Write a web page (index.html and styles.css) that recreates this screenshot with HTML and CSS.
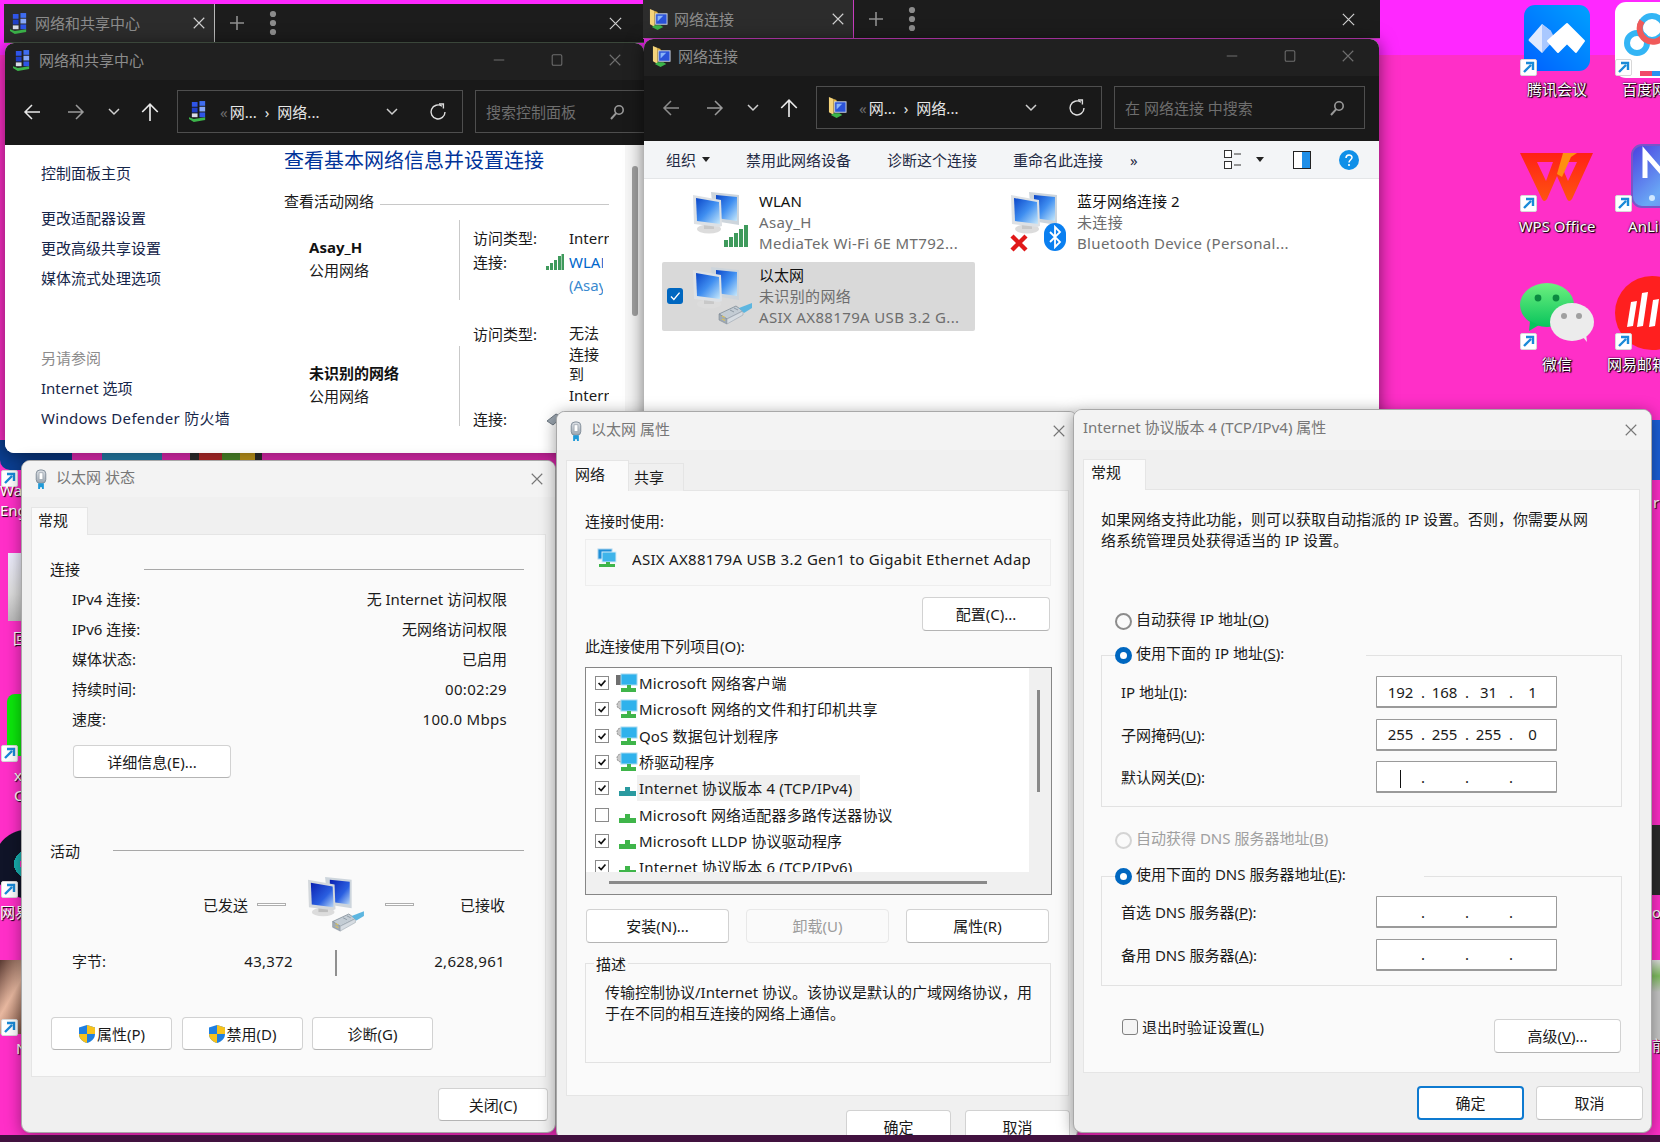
FILE: index.html
```html
<!DOCTYPE html>
<html lang="zh-CN">
<head>
<meta charset="utf-8">
<title>网络连接</title>
<link rel="stylesheet" href="styles.css">
</head>
<body>
<svg class="sprite" aria-hidden="true">
  <defs>
    <linearGradient id="gScreen" x1="0" y1="0" x2="1" y2="1"><stop offset="0" stop-color="#0b46c8"/><stop offset=".5" stop-color="#3f8ef0"/><stop offset="1" stop-color="#c6e8fb"/></linearGradient>
    <linearGradient id="gScreenDark" x1="0" y1="0" x2="1" y2="1"><stop offset="0" stop-color="#0a1fb0"/><stop offset=".6" stop-color="#2a5fe0"/><stop offset="1" stop-color="#b8d8f8"/></linearGradient>
    <linearGradient id="gMeet" x1="0" y1="1" x2="1" y2="0"><stop offset="0" stop-color="#0060ff"/><stop offset="1" stop-color="#00a2ff"/></linearGradient>
    <linearGradient id="gAn" x1="0" y1="0" x2="1" y2="1"><stop offset="0" stop-color="#4a3fe0"/><stop offset=".6" stop-color="#6aa8f5"/><stop offset="1" stop-color="#7a6ff0"/></linearGradient>
    <linearGradient id="gChat" x1="0" y1="0" x2="0" y2="1"><stop offset="0" stop-color="#6ef07f"/><stop offset="1" stop-color="#08c45c"/></linearGradient>
    <linearGradient id="gWps" x1="0" y1="0" x2="0" y2="1"><stop offset="0" stop-color="#ff2016"/><stop offset="1" stop-color="#ff5510"/></linearGradient>
    <linearGradient id="gPlug" x1="0" y1="0" x2="0" y2="1"><stop offset="0" stop-color="#dfe3e8"/><stop offset="1" stop-color="#9aa4ae"/></linearGradient>

    <symbol id="i-close" viewBox="0 0 16 16"><path d="M2 2l12 12M14 2L2 14" fill="none" stroke="currentColor" stroke-width="1.3"/></symbol>
    <symbol id="i-min" viewBox="0 0 16 16"><path d="M2 8h12" fill="none" stroke="currentColor" stroke-width="1.2"/></symbol>
    <symbol id="i-max" viewBox="0 0 16 16"><rect x="2.5" y="2" width="11" height="12" rx="1.5" fill="none" stroke="currentColor" stroke-width="1.2"/></symbol>
    <symbol id="i-plus" viewBox="0 0 16 16"><path d="M8 1v14M1 8h14" fill="none" stroke="currentColor" stroke-width="1.6"/></symbol>
    <symbol id="i-dots" viewBox="0 0 8 26"><circle cx="4" cy="4" r="3.1" fill="currentColor"/><circle cx="4" cy="13" r="3.1" fill="currentColor"/><circle cx="4" cy="22" r="3.1" fill="currentColor"/></symbol>
    <symbol id="i-back" viewBox="0 0 18 18"><path d="M17 9H2M9 2L2 9l7 7" fill="none" stroke="currentColor" stroke-width="1.5"/></symbol>
    <symbol id="i-fwd" viewBox="0 0 18 18"><path d="M1 9h15M9 2l7 7-7 7" fill="none" stroke="currentColor" stroke-width="1.5"/></symbol>
    <symbol id="i-up" viewBox="0 0 18 18"><path d="M9 17V2M2 9l7-7 7 7" fill="none" stroke="currentColor" stroke-width="1.5"/></symbol>
    <symbol id="i-chev" viewBox="0 0 14 10"><path d="M2 2l5 5 5-5" fill="none" stroke="currentColor" stroke-width="1.5"/></symbol>
    <symbol id="i-refresh" viewBox="0 0 18 18"><path d="M13 3.2A7 7 0 1 0 16 9" fill="none" stroke="currentColor" stroke-width="1.4"/><path d="M10 1h4.4v4.4" fill="none" stroke="currentColor" stroke-width="1.4"/></symbol>
    <symbol id="i-search" viewBox="0 0 16 16"><circle cx="10" cy="6" r="4.2" fill="none" stroke="currentColor" stroke-width="1.6"/><path d="M7 9.4L2 15" fill="none" stroke="currentColor" stroke-width="2"/></symbol>

    <symbol id="i-cpl" viewBox="0 0 20 22"><path d="M0 19l5 3 12-2v-3l-12 2-5-2z" fill="#3cb54a"/><rect x="3" y="1" width="6" height="5" fill="#2f55e8"/><rect x="11" y="0" width="6" height="5" fill="#3f6df0"/><rect x="3" y="7" width="6" height="5" fill="#1f3fc8"/><rect x="11" y="6" width="6" height="5" fill="#88a8f8"/><rect x="3" y="13" width="6" height="4" fill="#d8dce8"/><rect x="11" y="12" width="6" height="5" fill="#2f55e8"/></symbol>
    <symbol id="i-netfolder" viewBox="0 0 20 22"><path d="M1 0l5 2v17l-5-3z" fill="#f4d37a"/><path d="M6 2l3 1v3H6z" fill="#e8b63c"/><rect x="7" y="5" width="12" height="11" fill="#2a52d8" stroke="#cfd6e0"/><path d="M9 7h6l-6 6z" fill="#8ab4f8"/><path d="M3 19l6 3 6-3-3-2H6z" fill="#3cb54a"/></symbol>

    <symbol id="i-pc" viewBox="0 0 60 58">
      <path d="M19 0l28 3v30l-25-4z" fill="#cdd5dc"/><path d="M24 3l21 2v24l-21-3z" fill="url(#gScreen)"/>
      <ellipse cx="17" cy="37" rx="12" ry="4.500" fill="#dcdcdc"/><rect x="12" y="32" width="10" height="5" fill="#c8c8c8"/>
      <path d="M1 3l28 5 1 26-3 1-25-3z" fill="#dde1e5"/><path d="M4 6l23 4 1 22-23-3z" fill="url(#gScreen)"/>
    </symbol>
    <symbol id="i-pc-d" viewBox="0 0 60 58">
      <path d="M19 0l28 3v30l-25-4z" fill="#cdd5dc"/><path d="M24 3l21 2v24l-21-3z" fill="url(#gScreenDark)"/>
      <ellipse cx="17" cy="37" rx="12" ry="4.500" fill="#dcdcdc"/><rect x="12" y="32" width="10" height="5" fill="#bdbdbd"/>
      <path d="M1 3l28 5 1 26-3 1-25-3z" fill="#d4d8dc"/><path d="M4 6l23 4 1 22-23-3z" fill="url(#gScreenDark)"/>
    </symbol>
    <symbol id="i-wifi" viewBox="0 0 60 58"><g fill="#3f9a5c"><rect x="32" y="48" width="4" height="7"/><rect x="37" y="45" width="4" height="10"/><rect x="42" y="41" width="4" height="14"/><rect x="47" y="37" width="4" height="18"/><rect x="52" y="33" width="4" height="22"/></g></symbol>
    <symbol id="i-eth" viewBox="0 0 60 58"><path d="M27 47l17-8 7 5-16 8z" fill="#c3ccd4" stroke="#7f8b95" stroke-width=".8"/><path d="M27 47v6l8 4v-5z" fill="#a0abb5" stroke="#7f8b95" stroke-width=".6"/><path d="M35 52v5l16-9v-4z" fill="#d6dce2" stroke="#9aa4ae" stroke-width=".6"/><path d="M30 49l3 1.500M30 52l3 1.500" stroke="#d8c060" stroke-width="1.200"/><path d="M38 43l4 2M42 41l4 2" stroke="#8e9aa5" stroke-width="1"/><path d="M47 41l13-5v5l-8 5z" fill="#5db6e0"/></symbol>
    <symbol id="i-bt" viewBox="0 0 22 28"><rect width="22" height="28" rx="11" fill="#0a7ff0"/><path d="M6 9l10 10-5 5V4l5 5L6 19" fill="none" stroke="#fff" stroke-width="1.8"/></symbol>
    <symbol id="i-redx" viewBox="0 0 18 18"><path d="M2 2l14 14M16 2L2 16" stroke="#e01818" stroke-width="4.4" fill="none"/></symbol>
    <symbol id="i-plug" viewBox="0 0 14 22"><rect x="2" y="1" width="10" height="14" rx="4" fill="url(#gPlug)" stroke="#7e8a96"/><rect x="5" y="4" width="4" height="7" fill="#fff" stroke="#8a949e" stroke-width=".6"/><path d="M4 15h6v6H8v-2H6v2H4z" fill="#1f9ad8"/></symbol>
    <symbol id="i-shield" viewBox="0 0 18 20"><path d="M9 1l8 2.500V10c0 4.600-3.600 7.800-8 9-4.400-1.200-8-4.400-8-9V3.500z" fill="#1f7fe0"/><path d="M9 1l8 2.500V10H9zM9 10v9c-4.400-1.200-8-4.400-8-9z" fill="#f7c21c"/></symbol>
    <symbol id="i-nicsm" viewBox="0 0 22 20"><rect x="2" y="1" width="14" height="10" fill="#1f8fd8" stroke="#a9d4ee"/><rect x="6" y="4" width="14" height="10" fill="#3fb4ea" stroke="#d4ecf9"/><path d="M10 14h4v2h5v3H3v-3h7z" fill="#3fb54a"/></symbol>
    <symbol id="i-client" viewBox="0 0 22 20"><rect x="0" y="2" width="6" height="10" fill="#6f6f6f"/><rect x="5" y="1" width="16" height="11" fill="#2fb2ec" stroke="#a4d8ef"/><path d="M11 12h4v3h5v4H5v-4h6z" fill="#3fb54a"/></symbol>
    <symbol id="i-svc" viewBox="0 0 22 20"><circle cx="5" cy="6" r="4" fill="#c8c8c8" stroke="#8c8c8c" stroke-dasharray="2 1"/><rect x="5" y="1" width="16" height="11" fill="#2fb2ec" stroke="#a4d8ef"/><path d="M11 12h4v3h5v4H5v-4h6z" fill="#3fb54a"/></symbol>
    <symbol id="i-proto" viewBox="0 0 22 20"><path d="M9 9h5v4h6v5H3v-5h6z" fill="#3fb54a"/></symbol>
    <symbol id="i-proto-t" viewBox="0 0 22 20"><path d="M9 9h5v4h6v5H3v-5h6z" fill="#2a9aa0"/></symbol>
    <symbol id="i-shortcut" viewBox="0 0 17 17"><rect x=".5" y=".5" width="16" height="16" rx="1.500" fill="#fff" stroke="#d8d8d8"/><path d="M4 13l7-7M6 4h7v7" fill="none" stroke="#1a8ad8" stroke-width="2.400"/></symbol>
    <symbol id="i-wifi-s" viewBox="0 0 18 18"><g fill="#3f9a5c"><rect x="0" y="13" width="3" height="4"/><rect x="4" y="10" width="3" height="7"/><rect x="8" y="7" width="3" height="10"/><rect x="12" y="3" width="3" height="14"/><rect x="15.500" y="1" width="2.500" height="16"/></g></symbol>
    <symbol id="i-eth-s" viewBox="0 0 18 18"><path d="M1 11l9-7 6 3-9 8z" fill="#9aa4ae" stroke="#6e7882"/><path d="M12 4l5-3v4z" fill="#b8c8d4"/></symbol>
    <symbol id="i-views" viewBox="0 0 18 22"><rect x=".5" y="1.500" width="7" height="7" fill="#fff" stroke="#333"/><rect x=".5" y="12.500" width="7" height="7" fill="#fff" stroke="#333"/><path d="M10 5h7M10 16h7" stroke="#333"/></symbol>
    <symbol id="i-pane" viewBox="0 0 18 18"><rect x=".5" y=".5" width="17" height="17" fill="#fff" stroke="#222"/><rect x="9" y="1" width="8" height="16" fill="#1f8fe8"/></symbol>
    <symbol id="i-help" viewBox="0 0 20 20"><circle cx="10" cy="10" r="10" fill="#0f8fe8"/><path d="M7 8c0-4 6-4 6-.5 0 2-3 2.500-3 5" fill="none" stroke="#fff" stroke-width="1.500"/><circle cx="10" cy="15" r="1.100" fill="#fff"/></symbol>
    <symbol id="i-caret" viewBox="0 0 8 5"><path d="M0 0h8L4 5z" fill="#222"/></symbol>
    <symbol id="i-checkb" viewBox="0 0 14 14"><path d="M3 7l3 3 5-6" fill="none" stroke="#111" stroke-width="2"/></symbol>
  </defs>
</svg>

<main class="desktop">
  <!-- desktop icons -->
  <div class="dicon d-c1r1"><div class="dicon-art"><svg class="art" viewBox="0 0 74 74"><rect x="4" y="3" width="66" height="66" rx="11" fill="url(#gMeet)"/><path d="M22 22L9 37q-1 1 0 2l13 12 9-11-5-6 5-5z" fill="#dfe9ff"/><path d="M22 22l9 7 4 8-13 14z" fill="#a9c8ff"/><path d="M47 22l17 17-8 11-9-9-9 9-10-11z" fill="#fff" stroke="#fff" stroke-width="2" stroke-linejoin="round"/></svg><svg class="sc"><use href="#i-shortcut"/></svg></div><span class="dlabel">腾讯会议</span></div>
  <div class="dicon d-c2r1"><div class="dicon-art"><svg class="art" viewBox="0 0 74 74"><rect x="0" y="0" width="90" height="76" rx="11" fill="#fff"/><circle cx="22" cy="41" r="10" fill="none" stroke="#33b5f5" stroke-width="6"/><circle cx="37" cy="26" r="12" fill="none" stroke="#33b5f5" stroke-width="6"/><path d="M27 19a13 13 0 0 0 22 15" fill="none" stroke="#f05a5a" stroke-width="6"/><rect x="25" y="69" width="12" height="5" fill="#f04a6a"/><rect x="37" y="69" width="37" height="5" fill="#2a90f0"/></svg><svg class="sc"><use href="#i-shortcut"/></svg></div><span class="dlabel">百度网盘</span></div>
  <div class="dicon d-c1r2"><div class="dicon-art"><svg class="art" viewBox="0 0 74 74"><path fill-rule="evenodd" d="M0 15h73L52 61q-3 4-5 0L37 38 27 61q-3 4-5 0zM17 24l9 19 7-19zM44 24l-2 5 6 14 9-19z" fill="url(#gWps)"/><path d="M43 15h14l-6 4-9 20-5-3z" fill="#ff9010"/></svg><svg class="sc"><use href="#i-shortcut"/></svg></div><span class="dlabel">WPS Office</span></div>
  <div class="dicon d-c2r2"><div class="dicon-art"><svg class="art" viewBox="0 0 74 74"><rect x="17" y="7" width="62" height="62" rx="10" fill="url(#gAn)" stroke="#7a55c8" stroke-width="2"/><path d="M30 40V15l26 30" fill="none" stroke="#fff" stroke-width="5"/><circle cx="37" cy="60" r="3" fill="#cfe8ff"/></svg><svg class="sc"><use href="#i-shortcut"/></svg></div><span class="dlabel">AnLink</span></div>
  <div class="dicon d-c1r3"><div class="dicon-art"><svg class="art" viewBox="0 0 74 74"><ellipse cx="27" cy="29" rx="27" ry="22" fill="url(#gChat)"/><path d="M10 45l-1 10 10-6z" fill="#08c45c"/><circle cx="18" cy="22" r="3.400" fill="#0a8a40"/><circle cx="36" cy="22" r="3.400" fill="#0a8a40"/><ellipse cx="52" cy="46" rx="22" ry="19" fill="#ececec"/><path d="M62 60l5 6-1-9z" fill="#ececec"/><circle cx="44" cy="40" r="3" fill="#a0a0a0"/><circle cx="59" cy="40" r="3" fill="#a0a0a0"/></svg><svg class="sc"><use href="#i-shortcut"/></svg></div><span class="dlabel">微信</span></div>
  <div class="dicon d-c2r3"><div class="dicon-art"><svg class="art" viewBox="0 0 74 74"><circle cx="37" cy="37" r="37" fill="#ff1f1f"/><g fill="#fff"><path d="M16 26l6-1-4 25-6 1z"/><path d="M27 17l6-1-5 34-6 1z"/><path d="M38 24l6-1-4 27-6 1z"/><path d="M49 15l7-1-4 42-7 1z"/></g></svg><svg class="sc"><use href="#i-shortcut"/></svg></div><span class="dlabel">网易邮箱大师</span></div>

  <!-- icons half hidden at the screen edges -->
  <div class="sliver sl-a"></div><div class="sliver sl-b"></div><div class="sliver sl-c"></div>
  <div class="sliver sl-bin"></div><div class="sliver sl-green"></div><div class="sliver sl-ring"></div><div class="sliver sl-anime"></div>
  <div class="sliver sl-r1"></div><div class="sliver sl-r2"></div><div class="sliver sl-r3"></div>
  <svg class="edge-sc es1"><use href="#i-shortcut"/></svg>
  <svg class="edge-sc es2"><use href="#i-shortcut"/></svg>
  <svg class="edge-sc es3"><use href="#i-shortcut"/></svg>
  <svg class="edge-sc es4"><use href="#i-shortcut"/></svg>
  <span class="edge-t et1">Wa<br>Eng</span>
  <span class="edge-t et2">回</span>
  <span class="edge-t et3">x<br>C</span>
  <span class="edge-t et4">网易</span>
  <span class="edge-t et5">N</span>
  <span class="edge-t et6">r</span>
  <span class="edge-t et7">oc</span>
  <span class="edge-t et8">前</span>

  <!-- window A: tabs -->
  <div class="tabstrip tabs-a">
    <div class="tab"><svg class="ic19"><use href="#i-cpl"/></svg><span class="tab-name">网络和共享中心</span><svg class="tab-x"><use href="#i-close"/></svg></div>
    <svg class="strip-plus"><use href="#i-plus"/></svg>
    <svg class="strip-dots"><use href="#i-dots"/></svg>
    <svg class="strip-x"><use href="#i-close"/></svg>
  </div>

  <!-- window A -->
  <section class="win win-a">
    <header class="titlebar"><svg class="ic19"><use href="#i-cpl"/></svg><span class="win-title">网络和共享中心</span>
      <div class="caption"><svg><use href="#i-min"/></svg><svg><use href="#i-max"/></svg><svg><use href="#i-close"/></svg></div>
    </header>
    <div class="toolbar">
      <svg class="nav nav-on"><use href="#i-back"/></svg><svg class="nav"><use href="#i-fwd"/></svg><svg class="nav-ch"><use href="#i-chev"/></svg><svg class="nav nav-on nav-up"><use href="#i-up"/></svg>
      <div class="addr"><svg class="ic19"><use href="#i-cpl"/></svg><span class="crumb-more">«</span><span>网...</span><span class="crumb-sep">›</span><span>网络...</span>
        <div class="addr-end"><svg class="addr-ch"><use href="#i-chev"/></svg><svg class="addr-re"><use href="#i-refresh"/></svg></div></div>
      <div class="search search-a"><span>搜索控制面板</span><svg class="search-ic"><use href="#i-search"/></svg></div>
    </div>
    <div class="cp-body">
      <nav class="cp-nav">
        <a>控制面板主页</a>
        <a class="cp-gap">更改适配器设置</a><a>更改高级共享设置</a><a>媒体流式处理选项</a>
        <span class="cp-see">另请参阅</span>
        <a>Internet 选项</a><a class="latin-w">Windows Defender 防火墙</a>
      </nav>
      <div class="cp-main">
        <h1 class="cp-h1">查看基本网络信息并设置连接</h1>
        <div class="cp-sec"><span>查看活动网络</span><i></i></div>
        <div class="net net-1">
          <div class="net-name"><b>Asay_H</b><span>公用网络</span></div>
          <i class="net-line"></i>
          <div class="net-info">
            <div class="nrow"><span class="nl2">访问类型:</span><span class="nv">Internet</span></div>
            <div class="nrow"><span class="nl">连接:</span><svg class="ns"><use href="#i-wifi-s"/></svg><span class="nv link">WLAN</span></div>
            <div class="nrow nrow-c"><span class="nl2"></span><span class="nv link2">(Asay_H)</span></div>
          </div>
        </div>
        <div class="net net-2">
          <div class="net-name net-name-2"><b>未识别的网络</b><span>公用网络</span></div>
          <i class="net-line net-line-2"></i>
          <div class="net-info net-info-2">
            <div class="nrow"><span class="nl2">访问类型:</span><span class="nv">无法<br>连接<br>到<br>Internet</span></div>
            <div class="nrow nrow-e"><span class="nl">连接:</span><svg class="ns"><use href="#i-eth-s"/></svg></div>
          </div>
        </div>
      </div>
      <div class="cp-scroll"><i></i></div>
    </div>
  </section>

  <!-- window B: tabs -->
  <div class="tabstrip tabs-b">
    <div class="tab"><svg class="ic19"><use href="#i-netfolder"/></svg><span class="tab-name">网络连接</span><svg class="tab-x"><use href="#i-close"/></svg></div>
    <svg class="strip-plus"><use href="#i-plus"/></svg>
    <svg class="strip-dots"><use href="#i-dots"/></svg>
    <svg class="strip-x"><use href="#i-close"/></svg>
  </div>

  <!-- window B -->
  <section class="win win-b">
    <header class="titlebar"><svg class="ic19"><use href="#i-netfolder"/></svg><span class="win-title">网络连接</span>
      <div class="caption"><svg><use href="#i-min"/></svg><svg><use href="#i-max"/></svg><svg><use href="#i-close"/></svg></div>
    </header>
    <div class="toolbar">
      <svg class="nav nav-dim"><use href="#i-back"/></svg><svg class="nav"><use href="#i-fwd"/></svg><svg class="nav-ch"><use href="#i-chev"/></svg><svg class="nav nav-on nav-up"><use href="#i-up"/></svg>
      <div class="addr"><svg class="ic19"><use href="#i-netfolder"/></svg><span class="crumb-more">«</span><span>网...</span><span class="crumb-sep">›</span><span>网络...</span>
        <div class="addr-end"><svg class="addr-ch"><use href="#i-chev"/></svg><svg class="addr-re"><use href="#i-refresh"/></svg></div></div>
      <div class="search search-b"><span>在 网络连接 中搜索</span><svg class="search-ic"><use href="#i-search"/></svg></div>
    </div>
    <div class="cmdbar">
      <span class="cmd">组织<svg class="caret"><use href="#i-caret"/></svg></span>
      <span class="cmd">禁用此网络设备</span><span class="cmd">诊断这个连接</span><span class="cmd">重命名此连接</span><span class="cmd-more">»</span>
      <div class="cmd-end"><svg class="cmd-views"><use href="#i-views"/></svg><svg class="caret caret-v"><use href="#i-caret"/></svg><svg class="cmd-pane"><use href="#i-pane"/></svg><svg class="cmd-help"><use href="#i-help"/></svg></div>
    </div>
    <div class="conns">
      <div class="conn">
        <svg class="conn-ic" viewBox="0 0 60 58"><use href="#i-pc"/><use href="#i-wifi"/></svg>
        <div class="conn-t"><strong>WLAN</strong><span>Asay_H</span><span>MediaTek Wi-Fi 6E MT792...</span></div>
      </div>
      <div class="conn">
        <svg class="conn-ic" viewBox="0 0 60 58"><use href="#i-pc"/><use href="#i-redx" x="0" y="42" width="18" height="18"/><use href="#i-bt" x="34" y="31" width="22" height="28"/></svg>
        <div class="conn-t"><strong>蓝牙网络连接 2</strong><span>未连接</span><span>Bluetooth Device (Personal...</span></div>
      </div>
      <div class="conn conn-sel">
        <span class="conn-check"><svg viewBox="0 0 14 14"><path d="M3.500 7.500l2.500 2.500 5-6" fill="none" stroke="#fff" stroke-width="1.200"/></svg></span>
        <svg class="conn-ic" viewBox="0 0 60 58"><use href="#i-pc"/><use href="#i-eth"/></svg>
        <div class="conn-t"><strong>以太网</strong><span>未识别的网络</span><span>ASIX AX88179A USB 3.2 G...</span></div>
      </div>
    </div>
  </section>

  <!-- status dialog -->
  <section class="dlg dlg-status">
    <header class="dlg-title dt-status"><svg class="plug"><use href="#i-plug"/></svg><span>以太网 状态</span><svg class="dlg-x"><use href="#i-close"/></svg></header>
    <div class="dtabs"><span class="dtab dtab-on dt-w56">常规</span></div>
    <div class="dpanel st-panel">
      <div class="st-sec st-sec-1"><span>连接</span><i></i></div>
      <div class="st-rows">
        <div class="st-row"><span>IPv4 连接:</span><span>无 Internet 访问权限</span></div>
        <div class="st-row"><span>IPv6 连接:</span><span>无网络访问权限</span></div>
        <div class="st-row"><span>媒体状态:</span><span>已启用</span></div>
        <div class="st-row"><span>持续时间:</span><span class="latin-w">00:02:29</span></div>
        <div class="st-row"><span>速度:</span><span class="latin-w">100.0 Mbps</span></div>
      </div>
      <button class="btn st-detail">详细信息(E)...</button>
      <div class="st-sec st-sec-2"><span>活动</span><i></i></div>
      <div class="st-act">
        <span class="st-lab">已发送</span><i class="st-dash"></i>
        <svg class="st-pc" viewBox="0 0 60 58"><use href="#i-pc-d"/><use href="#i-eth"/></svg>
        <i class="st-dash"></i><span class="st-lab st-lab-r">已接收</span>
      </div>
      <div class="st-bytes"><span class="st-bl">字节:</span><span class="st-n1 latin-w">43,372</span><span class="st-n2 latin-w">2,628,961</span></div>
      <div class="st-btns">
        <button class="btn st-b"><svg class="shield"><use href="#i-shield"/></svg>属性(P)</button>
        <button class="btn st-b"><svg class="shield"><use href="#i-shield"/></svg>禁用(D)</button>
        <button class="btn st-b">诊断(G)</button>
      </div>
    </div>
    <footer class="dfoot st-foot"><button class="btn st-close">关闭(C)</button></footer>
  </section>

  <!-- properties dialog -->
  <section class="dlg dlg-props">
    <header class="dlg-title dt-props"><svg class="plug"><use href="#i-plug"/></svg><span>以太网 属性</span><svg class="dlg-x"><use href="#i-close"/></svg></header>
    <div class="dtabs dtabs-p"><span class="dtab dtab-on dt-w63">网络</span><span class="dtab dtab-off">共享</span></div>
    <div class="dpanel pr-panel">
      <div class="pr-lab pr-lab-1">连接时使用:</div>
      <div class="pr-dev"><svg class="pr-dev-ic"><use href="#i-nicsm"/></svg><span class="latin-w">ASIX AX88179A USB 3.2 Gen1 to Gigabit Ethernet Adapter</span></div>
      <div class="pr-cfg"><button class="btn pr-b-cfg">配置(C)...</button></div>
      <div class="pr-lab pr-lab-2">此连接使用下列项目(O):</div>
      <div class="pr-list">
        <ul class="pr-items">
          <li><span class="cb"><svg><use href="#i-checkb"/></svg></span><svg class="li-ic"><use href="#i-client"/></svg><span class="li-t">Microsoft 网络客户端</span></li>
          <li><span class="cb"><svg><use href="#i-checkb"/></svg></span><svg class="li-ic"><use href="#i-svc"/></svg><span class="li-t">Microsoft 网络的文件和打印机共享</span></li>
          <li><span class="cb"><svg><use href="#i-checkb"/></svg></span><svg class="li-ic"><use href="#i-svc"/></svg><span class="li-t">QoS 数据包计划程序</span></li>
          <li><span class="cb"><svg><use href="#i-checkb"/></svg></span><svg class="li-ic"><use href="#i-svc"/></svg><span class="li-t">桥驱动程序</span></li>
          <li><span class="cb"><svg><use href="#i-checkb"/></svg></span><svg class="li-ic"><use href="#i-proto-t"/></svg><span class="li-t li-hl">Internet 协议版本 4 (TCP/IPv4)</span></li>
          <li><span class="cb"></span><svg class="li-ic"><use href="#i-proto"/></svg><span class="li-t">Microsoft 网络适配器多路传送器协议</span></li>
          <li><span class="cb"><svg><use href="#i-checkb"/></svg></span><svg class="li-ic"><use href="#i-proto"/></svg><span class="li-t">Microsoft LLDP 协议驱动程序</span></li>
          <li><span class="cb"><svg><use href="#i-checkb"/></svg></span><svg class="li-ic"><use href="#i-proto"/></svg><span class="li-t">Internet 协议版本 6 (TCP/IPv6)</span></li>
        </ul>
        <div class="pr-vs"><i></i></div>
        <div class="pr-hs"><i></i></div>
      </div>
      <div class="pr-btns"><button class="btn">安装(N)...</button><button class="btn btn-off">卸载(U)</button><button class="btn">属性(R)</button></div>
      <fieldset class="pr-desc"><legend>描述</legend><p>传输控制协议/Internet 协议。该协议是默认的广域网络协议，用<br>于在不同的相互连接的网络上通信。</p></fieldset>
    </div>
    <footer class="dfoot pr-foot"><button class="btn pr-ok">确定</button><button class="btn pr-ok">取消</button></footer>
  </section>

  <!-- TCP/IPv4 dialog -->
  <section class="dlg dlg-tcp">
    <header class="dlg-title dt-tcp"><span>Internet 协议版本 4 (TCP/IPv4) 属性</span><svg class="dlg-x"><use href="#i-close"/></svg></header>
    <div class="dtabs dtabs-t"><span class="dtab dtab-on dt-w63">常规</span></div>
    <div class="dpanel tc-panel">
      <p class="tc-intro">如果网络支持此功能，则可以获取自动指派的 IP 设置。否则，你需要从网<br>络系统管理员处获得适当的 IP 设置。</p>
      <div class="radio-row rr-1"><span class="radio"></span>自动获得 IP 地址(<u>O</u>)</div>
      <fieldset class="tc-group tg-ip">
        <legend class="lg-ip"><span class="radio radio-on"></span>使用下面的 IP 地址(<u>S</u>):</legend>
        <div class="f-row"><span>IP 地址(<u>I</u>):</span><div class="ipf"><span class="oct">192</span><span class="dot">.</span><span class="oct">168</span><span class="dot">.</span><span class="oct">31</span><span class="dot">.</span><span class="oct">1</span></div></div>
        <div class="f-row"><span>子网掩码(<u>U</u>):</span><div class="ipf"><span class="oct">255</span><span class="dot">.</span><span class="oct">255</span><span class="dot">.</span><span class="oct">255</span><span class="dot">.</span><span class="oct">0</span></div></div>
        <div class="f-row"><span>默认网关(<u>D</u>):</span><div class="ipf"><span class="oct"><i class="ip-caret"></i></span><span class="dot">.</span><span class="oct"></span><span class="dot">.</span><span class="oct"></span><span class="dot">.</span><span class="oct"></span></div></div>
      </fieldset>
      <div class="radio-row rr-2 rr-off"><span class="radio radio-off"></span>自动获得 DNS 服务器地址(<u>B</u>)</div>
      <fieldset class="tc-group tg-dns">
        <legend class="lg-dns"><span class="radio radio-on"></span>使用下面的 DNS 服务器地址(<u>E</u>):</legend>
        <div class="f-row"><span>首选 DNS 服务器(<u>P</u>):</span><div class="ipf"><span class="oct"></span><span class="dot">.</span><span class="oct"></span><span class="dot">.</span><span class="oct"></span><span class="dot">.</span><span class="oct"></span></div></div>
        <div class="f-row"><span>备用 DNS 服务器(<u>A</u>):</span><div class="ipf"><span class="oct"></span><span class="dot">.</span><span class="oct"></span><span class="dot">.</span><span class="oct"></span><span class="dot">.</span><span class="oct"></span></div></div>
      </fieldset>
      <div class="tc-opts"><label class="tc-check"><span class="cb2"></span>退出时验证设置(<u>L</u>)</label><button class="btn tc-adv">高级(<u>V</u>)...</button></div>
    </div>
    <footer class="dfoot tc-foot"><button class="btn tc-b tc-primary">确定</button><button class="btn tc-b">取消</button></footer>
  </section>

  <div class="taskbar"></div>
</main>
</body>
</html>
```
FILE: styles.css
```css
* { box-sizing: border-box; }
html, body { margin: 0; padding: 0; }
body { width: 1660px; height: 1142px; overflow: hidden; background: #ff2fc8; }
ul { list-style: none; margin: 0; padding: 0; }
p { margin: 0; }
i { font-style: normal; }
.sprite { position: absolute; width: 0; height: 0; overflow: hidden; }
.latin-w { letter-spacing: .3px; }

.desktop {
  position: relative; width: 1660px; height: 1142px; overflow: hidden;
  font: 15px/22px "Noto Sans", "Noto Sans CJK SC", sans-serif; color: #1a1a1a;
  background: linear-gradient(#ff28ff 0 55px, #ff2fc8 55px);
}
.taskbar { position: absolute; left: 0; right: 0; bottom: 0; height: 7px; background: #41123f; z-index: 50; }

/* desktop icons */
.dicon { position: absolute; width: 110px; display: flex; flex-direction: column; align-items: center; }
.dicon-art { position: relative; width: 74px; height: 74px; }
.art { display: block; width: 74px; height: 74px; overflow: visible; }
.sc { position: absolute; left: 0; top: 57px; width: 17px; height: 17px; }
.dlabel { margin-top: 4px; white-space: nowrap; color: #fff; font-size: 15px; line-height: 20px; text-shadow: 1px 1px 1px #000, 0 0 2px #203, 1px 0 1px #203; }
.d-c1r1 { left: 1502px; top: 2px; }
.d-c2r1 { left: 1597px; top: 2px; }
.d-c1r1 .dlabel, .d-c2r1 .dlabel { margin-top: 3px; }
.d-c1r2 { left: 1502px; top: 138px; }
.d-c2r2 { left: 1597px; top: 138px; }
.d-c1r3 { left: 1502px; top: 276px; }
.d-c2r3 { left: 1597px; top: 276px; }

.sliver { position: absolute; }
.sl-a { left: 0; top: 440px; width: 72px; height: 30px; background: #0b3f92; border-radius: 0 0 10px 10px; }
.sl-b { left: 102px; top: 450px; width: 60px; height: 10px; background: #2a8fc0; }
.sl-c { left: 190px; top: 450px; width: 72px; height: 10px; background: linear-gradient(90deg, #333 0 12%, #d03030 12% 45%, #5aa030 45% 70%, #e0b020 70% 90%, #333 90%); }
.sl-bin { left: 8px; top: 553px; width: 14px; height: 68px; background: linear-gradient(#eef 0, #ddd 60%, #bbb); }
.sl-green { left: 7px; top: 694px; width: 15px; height: 62px; background: #0ce80c; border-radius: 8px 0 0 8px; }
.sl-ring { left: 0; top: 828px; width: 22px; height: 70px; background: radial-gradient(circle at 28px 36px, #ff2fc8 0 8px, #18b0b0 8px 14px, #101428 14px 34px, transparent 35px); }
.sl-anime { left: 0; top: 960px; width: 22px; height: 74px; background: linear-gradient(120deg, #5a3a32, #e8b8a0 50%, #7a5040); }
.sl-r1 { left: 1650px; top: 420px; width: 10px; height: 60px; background: #1a5fd8; }
.sl-r2 { left: 1650px; top: 825px; width: 10px; height: 70px; background: #2c2c2c; }
.sl-r3 { left: 1650px; top: 960px; width: 10px; height: 80px; background: linear-gradient(#e0e0e0, #80c060 20%, #c8c8c8 40%); }
.edge-sc { position: absolute; left: 1px; width: 17px; height: 17px; }
.es1 { top: 470px; } .es2 { top: 745px; } .es3 { top: 881px; } .es4 { top: 1019px; }
.edge-t { position: absolute; color: #fff; font-size: 15px; line-height: 20px; text-shadow: 1px 1px 1px #000; }
.et1 { left: 0; top: 480px; }
.et2 { left: 13px; top: 628px; }
.et3 { left: 14px; top: 765px; }
.et4 { left: 0; top: 902px; }
.et5 { left: 16px; top: 1038px; }
.et6 { left: 1653px; top: 492px; }
.et7 { left: 1652px; top: 902px; }
.et8 { left: 1652px; top: 1035px; }

/* dark explorer windows */
.tabstrip { position: absolute; display: flex; align-items: center; height: 39px; background: #1c1c1c; color: #d0d0d0; }
.tabs-a { left: 4px; top: 4px; width: 640px; border-bottom: 1px solid #4a5a4a; z-index: 2; }
.tabs-b { left: 643px; top: 0; width: 737px; border-bottom: 1px solid #c93cc0; z-index: 4; }
.tab { display: flex; align-items: center; width: 211px; height: 38px; padding-left: 6px; background: #2c2c2c; border-right: 1px solid #b8b8b8; }
.tabs-b .tab { border-right-color: #c93cc0; }
.tab-name { margin-left: 6px; color: #8c8c8c; white-space: nowrap; }
.tab-x { width: 14px; height: 14px; margin-left: auto; margin-right: 8px; }
.strip-plus { width: 16px; height: 16px; margin-left: 14px; color: #909090; }
.strip-dots { width: 8px; height: 26px; margin-left: 24px; color: #8c8c8c; }
.strip-x { width: 15px; height: 15px; margin-left: auto; margin-right: 21px; }
.tabs-b .strip-x { margin-right: 24px; }
.ic19 { width: 19px; height: 21px; flex: none; }

.win { position: absolute; display: flex; flex-direction: column; overflow: hidden; border-radius: 9px; box-shadow: 0 2px 18px rgba(0, 0, 0, .55); background: #fff; }
.win-a { left: 5px; top: 43px; width: 639px; height: 410px; z-index: 3; }
.win-b { left: 644px; top: 39px; width: 735px; height: 400px; z-index: 5; }
.titlebar { display: flex; align-items: center; flex: none; height: 37px; padding: 0 0 3px 8px; background: #202020; color: #8c8c8c; }
.win-title { margin-left: 7px; white-space: nowrap; }
.win-b .titlebar { padding-right: 2px; }
.caption { display: flex; margin-left: auto; color: #6e6e6e; }
.caption svg { width: 58px; height: 14px; }
.toolbar { display: flex; align-items: flex-start; flex: none; height: 65px; padding: 10px 0 0 5px; background: #191919; color: #9a9a9a; }
.nav { width: 44px; height: 18px; margin-top: 13px; }
.nav-on { color: #e8e8e8; }
.nav-dim { color: #8c8c8c; }
.nav-up { width: 40px; margin-top: 12px; height: 20px; }
.nav-ch { width: 32px; height: 10px; margin-top: 17px; color: #cfcfcf; }
.addr { display: flex; align-items: center; width: 286px; height: 43px; margin-left: 7px; padding: 0 15px 0 11px; border: 1px solid #4e4e4e; color: #e6e6e6; white-space: nowrap; }
.crumb-more { margin: 0 2px 0 12px; color: #6c6c6c; }
.crumb-sep { margin: 0 8px; }
.addr-end { display: flex; align-items: center; margin-left: auto; }
.addr-ch { width: 14px; height: 10px; color: #cfcfcf; }
.addr-re { width: 18px; height: 18px; margin-left: 30px; color: #dedede; }
.search { display: flex; align-items: center; height: 43px; margin-left: 12px; padding-left: 10px; border: 1px solid #4e4e4e; color: #6e6e6e; white-space: nowrap; }
.search-a { width: 169px; border-right: 0; }
.search-b { width: 251px; }
.search-ic { width: 16px; height: 16px; margin-left: auto; margin-right: 19px; color: #9a9a9a; }

/* control panel */
.cp-body { display: flex; flex: 1; min-height: 0; background: #fff; }
.cp-nav { display: flex; flex-direction: column; flex: none; width: 279px; padding: 13px 0 0 36px; color: #16264a; white-space: nowrap; }
.cp-nav a, .cp-see { line-height: 30px; }
.cp-gap { margin-top: 15px; }
.cp-see { margin-top: 50px; color: #8c8c8c; }
.cp-main { flex: none; width: 325px; overflow: hidden; }
.cp-h1 { margin: 0; padding-top: 1px; font-size: 20px; font-weight: 400; line-height: 30px; color: #003399; white-space: nowrap; }
.cp-sec { display: flex; margin-top: 14px; white-space: nowrap; }
.cp-sec i { flex: 1; height: 1px; margin: 14px 0 0 6px; background: #c8c8c8; }
.net { display: flex; align-items: flex-start; height: 80px; }
.net-1 { margin-top: 8px; }
.net-2 { margin-top: 24px; height: 105px; }
.net-name { display: flex; flex-direction: column; flex: none; width: 175px; padding: 16px 0 0 25px; line-height: 23px; white-space: nowrap; }
.net-name b { color: #111; }
.net-name-2 { padding-top: 38px; }
.net-line { flex: none; width: 1px; height: 80px; background: #c9c9c9; }
.net-line-2 { margin-top: 22px; }
.net-info { padding: 7px 0 0 13px; }
.net-info-2 { padding-top: 0; margin-top: -1px; }
.nrow { display: flex; align-items: flex-start; margin-bottom: 2px; line-height: 22px; }
.nrow-c { line-height: 21px; }
.nrow-e { margin-top: 3px; }
.nl { flex: none; width: 73px; }
.nl2 { flex: none; width: 96px; }
.ns { flex: none; width: 18px; height: 18px; margin: 2px 5px 0 0; }
.nv { flex: none; width: 40px; overflow: hidden; white-space: nowrap; }
.net-info-2 .nv { line-height: 20.500px; }
.link, .link2 { width: 34px; }
.link { color: #0066cc; }
.link2 { color: #3a8ad0; }
.cp-scroll { flex: 1; position: relative; padding: 21px 0 0 7px; background: #f6f6f6; margin-left: 16px; }
.cp-scroll i { display: block; width: 6px; height: 150px; background: #a0a0a0; border-radius: 3px; }

/* network connections */
.cmdbar { display: flex; align-items: center; flex: none; height: 38px; padding-left: 22px; background: #f3f5f7; border-bottom: 1px solid #e4e6e8; color: #1f2a44; white-space: nowrap; }
.cmd { display: flex; align-items: center; margin-right: 36px; }
.caret { width: 8px; height: 5px; margin-left: 6px; }
.cmd-more { margin-left: -9px; }
.cmd-end { display: flex; align-items: center; margin-left: auto; padding-right: 20px; }
.cmd-views { width: 18px; height: 22px; margin-right: 1px; }
.caret-v { margin: 0 0 0 13px; }
.cmd-pane { width: 18px; height: 18px; margin-left: 29px; }
.cmd-help { width: 20px; height: 20px; margin-left: 28px; }
.conns { display: grid; grid-template-columns: 313px 313px; grid-auto-rows: 69px; gap: 6px 5px; padding: 8px 0 0 18px; background: #fff; flex: 1; }
.conn { position: relative; display: flex; padding: 4px 0 0 30px; border-radius: 2px; }
.conn-sel { background: #d9d9d9; padding-top: 3px; }
.conn-ic { flex: none; width: 60px; height: 58px; margin-top: 1px; overflow: visible; }
.conn-sel .conn-ic { margin-top: 2px; }
.conn-t { display: flex; flex-direction: column; margin-left: 7px; line-height: 21px; white-space: nowrap; color: #6d6d6d; letter-spacing: .35px; }
.conn-t strong { font-weight: 400; color: #111; letter-spacing: 0; }
.conn-check { position: absolute; left: 5px; top: 26px; width: 16px; height: 16px; background: #0067c0; border-radius: 3px; }
.conn-check svg { display: block; width: 16px; height: 16px; }

/* dialogs */
.dlg { position: absolute; display: flex; flex-direction: column; overflow: hidden; background: #f0f0f0; border: 1px solid #a8a8a8; border-radius: 9px; box-shadow: 0 3px 16px rgba(0, 0, 0, .4); }
.dlg-status { left: 21px; top: 460px; width: 535px; height: 673px; z-index: 6; }
.dlg-props { left: 556px; top: 411px; width: 522px; height: 729px; z-index: 7; }
.dlg-tcp { left: 1073px; top: 409px; width: 579px; height: 724px; z-index: 8; }
.dlg-title { display: flex; align-items: center; flex: none; padding: 0 13px 0 12px; color: #777; background: #f3f3f3; white-space: nowrap; }
.dlg-title > span { position: relative; top: -2px; }
.dt-status { height: 36px; padding-right: 11px; }
.dt-props { height: 38px; padding-right: 11px; }
.dt-tcp { height: 40px; padding-left: 9px; }
.dt-tcp > span { top: -3px; }
.plug { width: 14px; height: 21px; margin-right: 8px; }
.dlg-x { width: 14px; height: 14px; margin-left: auto; color: #777; }
.dtabs { display: flex; align-items: flex-end; flex: none; padding: 10px 0 0 9px; }
.dtabs-t { padding-top: 9px; }
.dtab { display: block; height: 28px; margin-bottom: -1px; padding-left: 6px; background: #fafafa; border: 1px solid #e5e5e5; border-bottom: 0; position: relative; z-index: 1; line-height: 24px; }
.dt-w56 { width: 57px; }
.dt-w63 { width: 63px; height: 31px; padding-left: 8px; line-height: 26px; }
.dtabs-t .dt-w63 { padding-left: 7px; line-height: 24px; }
.dtab-off { width: 55px; height: 28px; padding-left: 5px; background: #f0f0f0; border-left: 0; line-height: 26px; }
.dpanel { flex: none; margin: 0 9px; background: #fafafa; border: 1px solid #e5e5e5; }
.dfoot { display: flex; justify-content: flex-end; }
.btn { display: flex; align-items: center; justify-content: center; padding: 0; font: inherit; line-height: 20px; color: #1a1a1a; background: #fff; border: 1px solid #d2d2d2; border-bottom-color: #b4b4b4; border-radius: 4px; white-space: nowrap; }
.btn-off { background: #fafafa; border-color: #e8e8e8; color: #9c9c9c; }

/* status dialog */
.dlg-status .dpanel { width: 515px; }
.st-panel { height: 543px; padding: 23px 0 0 18px; }
.st-sec { display: flex; padding-right: 21px; }
.st-sec span { flex: none; }
.st-sec i { flex: 1; height: 1px; margin-top: 11px; background: #a8a8a8; }
.st-sec-1 span { width: 94px; }
.st-sec-2 span { width: 63px; }
.st-sec-2 { margin-top: 62px; }
.st-sec-2 i { margin-top: 10px; }
.st-rows { margin: 4px 38px 0 22px; }
.st-row { display: flex; justify-content: space-between; line-height: 30px; }
.st-detail { width: 158px; height: 33px; margin: 11px 0 0 23px; }
.st-act { display: flex; align-items: center; height: 55px; margin: 15px 40px 0 153px; }
.st-lab { flex: none; }
.st-lab-r { margin-left: auto; }
.st-dash { flex: none; width: 29px; height: 3px; margin: 0 20px 0 9px; background: #fff; border: 1px solid #aeaeae; }
.st-pc + .st-dash { margin: 0; }
.st-pc { flex: none; width: 59px; height: 55px; margin-right: 20px; overflow: visible; }
.st-bytes { display: grid; grid-template-columns: 44px 177px 44px 168px; height: 26px; margin: 18px 0 0 22px; line-height: 22px; }
.st-n1 { text-align: right; }
.st-n2 { grid-column: 4; text-align: right; }
.st-bytes::after { content: ""; grid-column: 3; grid-row: 1; justify-self: end; width: 2px; height: 26px; background: #909090; }
.st-btns { display: flex; gap: 9.500px; margin: 41px 0 0 1px; }
.st-b { width: 121px; height: 33px; }
.shield { width: 18px; height: 20px; margin-right: 1px; }
.st-foot { padding: 11px 0 0 416px; justify-content: flex-start; }
.st-close { width: 110px; height: 33px; }

/* properties dialog */
.pr-panel { height: 606px; width: 503px; padding: 19px 0 0 18px; }
.pr-dev { display: flex; width: 466px; height: 47px; margin-top: 7px; padding: 8px 20px 0 10px; overflow: hidden; background: #f9f9f9; border: 1px solid #eee; white-space: nowrap; }
.pr-dev-ic { flex: none; width: 22px; height: 20px; margin-right: 14px; }
.pr-dev span { overflow: hidden; }
.pr-cfg { display: flex; justify-content: flex-end; width: 465px; margin-top: 11px; }
.pr-b-cfg { width: 128px; height: 34px; }
.pr-lab-2 { margin-top: 4px; }
.pr-list { display: grid; grid-template-columns: 443px 1fr; grid-template-rows: 204px 1fr; width: 467px; height: 228px; margin-top: 10px; background: #f0f0f0; border: 1px solid #868686; }
.pr-items { padding-top: 2px; overflow: hidden; background: #fff; }
.pr-items li { display: flex; align-items: center; height: 26.300px; white-space: nowrap; }
.cb { display: block; flex: none; width: 14px; height: 14px; margin-left: 9px; background: #fff; border: 1px solid #8a8a8a; }
.cb svg { display: block; width: 12px; height: 12px; }
.li-ic { flex: none; width: 22px; height: 20px; margin-left: 7px; }
.li-t { display: flex; align-items: center; height: 100%; padding: 0 8px 0 2px; margin-left: -1px; letter-spacing: .15px; }
.li-hl { background: #f0f0f0; }
.pr-vs { padding: 22px 0 0 8px; }
.pr-vs i { display: block; width: 3px; height: 102px; background: #8a8a8a; }
.pr-hs { grid-column: 1 / 3; padding: 9px 0 0 23px; }
.pr-hs i { display: block; width: 378px; height: 3px; background: #8a8a8a; }
.pr-btns { display: flex; gap: 17px; margin: 14px 0 0 1px; }
.pr-btns .btn { width: 143px; height: 34px; }
.pr-desc { width: 466px; height: 111px; margin: 9px 0 0; padding: 0 0 0 19px; background: none; border: 1px solid #e2e2e2; }
.pr-desc legend { margin-left: -11px; padding: 0 2px; transform: translateY(1px); }
.pr-desc p { margin-top: 8px; line-height: 21px; white-space: nowrap; }
.pr-foot { padding: 14px 7px 0 0; gap: 14px; }
.pr-ok { width: 105px; height: 34px; }

/* tcp dialog */
.tc-panel { height: 584px; width: 557px; padding: 19px 0 0 17px; }
.tc-intro { line-height: 21px; white-space: nowrap; }
.radio { display: inline-block; flex: none; position: relative; top: 2px; width: 17px; height: 17px; margin-right: 4px; background: #fafafa; border: 2px solid #8c8c8c; border-radius: 50%; vertical-align: -3px; }
.radio-on { background: #fff; border: 5px solid #0067c0; }
.radio-off { border-color: #d4d4d4; }
.radio-row { display: flex; align-items: center; height: 22px; padding-left: 14px; white-space: nowrap; }
.rr-1 { margin-top: 57px; }
.rr-2 { margin-top: 20px; }
.rr-off { color: #a0a0a0; }
.tc-group { width: 521px; margin: 14px 0 0; padding: 9px 64px 0 19px; border: 1px solid #e2e2e2; }
.tc-group legend { margin-left: -6px; padding: 0; background: #fafafa; white-space: nowrap; transform: translateY(-2px); }
.lg-ip { width: 251px; }
.lg-dns { width: 309px; }
.tg-ip { height: 163px; padding-top: 10px; }
.tg-dns { height: 121px; margin-top: 16px; }
.f-row { display: flex; justify-content: space-between; align-items: center; height: 32px; margin-bottom: 10.500px; white-space: nowrap; }
.ipf { display: flex; align-items: center; width: 181px; height: 32px; padding-left: 3px; background: #fff; border: 1px solid #9a9a9a; border-bottom-width: 2px; border-radius: 1px; }
.oct { position: relative; width: 41px; text-align: center; }
.dot { width: 3px; text-align: center; }
.ip-caret { position: absolute; left: 20px; top: -7px; width: 1px; height: 18px; background: #111; }
.tc-opts { display: flex; justify-content: space-between; align-items: center; width: 520px; margin-top: 30px; padding-left: 21px; }
.tc-check { display: flex; align-items: center; margin-bottom: 18px; }
.cb2 { width: 16px; height: 16px; margin-right: 4px; background: #f4f4f4; border: 1px solid #808080; border-radius: 3px; }
.tc-adv { width: 127px; height: 34px; }
.tc-foot { padding: 13px 8px 0 0; gap: 12px; }
.tc-b { width: 107px; height: 34px; }
.tc-primary { border: 2px solid #0e7ad0; }
```
